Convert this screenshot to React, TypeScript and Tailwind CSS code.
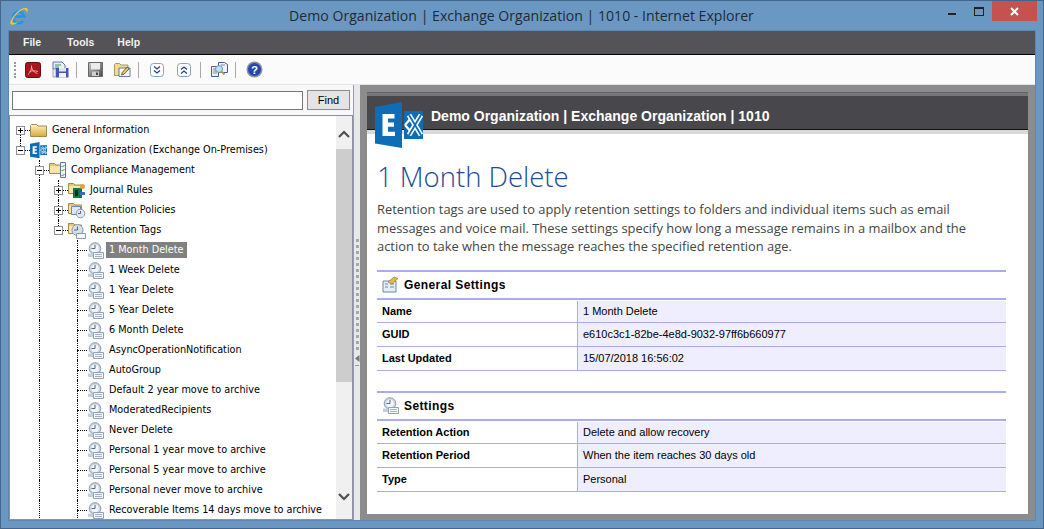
import React from "react";

function Folder() {
  return (
    <svg width="17" height="16" viewBox="0 0 17 16" className="shrink-0">
      <defs>
        <linearGradient id="fold" x1="0" y1="0" x2="0" y2="1">
          <stop offset="0" stopColor="#fff3c4" />
          <stop offset="1" stopColor="#d9a93c" />
        </linearGradient>
      </defs>
      <path d="M0.500 14.500V3.500l1-1h5l1.500 1.500h8.500v10.500z" fill="url(#fold)" stroke="#a08a4c" />
    </svg>
  );
}

function TagIcon({ size = 17 }: { size?: number }) {
  return (
    <svg width={size} height={size} viewBox="0 0 17 17" className="shrink-0">
      <circle cx="8" cy="6.500" r="5.800" fill="#c9d4e2" stroke="#8f9cae" />
      <circle cx="8" cy="6.500" r="3.800" fill="#f2f5f9" />
      <path d="M8 3v3.500H4.500" stroke="#56657a" fill="none" />
      <path d="M1 11.500h7V15H1z" fill="#c5d0dd" />
      <path d="M6.500 10.500h10v6h-10z" fill="#f3f6fa" stroke="#93a1b4" />
      <path d="M8 12.500h7M8 14.500h7" stroke="#a5b3c4" />
    </svg>
  );
}

function ExLogo({ size = 16 }: { size?: number }) {
  return (
    <svg width={size} height={size * 46 / 48} viewBox="0 0 48 46" className="shrink-0">
      <path d="M0 5 27 0v46L0 41.500z" fill="#0e6db6" />
      <path d="M29 9h19v28H29z" fill="#0e6db6" />
      <path d="M7.500 12h12v4.500H13v4h6v4.300h-6v5h7V34H7.500z" fill="#fff" />
      <path d="M30 23l7-8M30 23l7 8" stroke="#fff" strokeWidth="2.200" fill="none" />
      <path d="M34 13l12 20M46 13L34 33" stroke="#fff" strokeWidth="5" fill="none" />
      <path d="M34 13l12 20M46 13L34 33" stroke="#0e6db6" strokeWidth="1.800" fill="none" />
    </svg>
  );
}

function TreeIcon({ kind }: { kind: string }) {
  if (kind === "folder") return <Folder />;
  if (kind === "ex") return <ExLogo size={17} />;
  return (
    <svg width="18" height="18" viewBox="0 0 18 18" className="shrink-0">
      <path d="M0.500 12.500V2.500h5l1.500 1.500h6.500v8.500z" fill="#e8c86e" stroke="#a08a4c" />
      <path d="M1 5h12v7H1z" fill="#f6e6ad" />
      {kind === "compliance" && (
        <>
          <path d="M11.500 1.500h5v15h-5z" fill="#eef3f8" stroke="#5f7a9e" />
          <path d="M12.500 5l1 1 2-2M12.500 9l1 1 2-2M12.500 14l1 1 2-2" stroke="#3e9b3e" fill="none" />
        </>
      )}
      {kind === "journal" && (
        <>
          <path d="M5 7h9v10H5z" fill="#0f7a3b" />
          <path d="M7 9h3v6H7z" fill="#0c2a16" />
          <circle cx="14.500" cy="5.500" r="2.500" fill="#e8a13c" />
          <path d="M12 11h5v3h-5z" fill="#3b6cc4" />
        </>
      )}
      {kind === "policies" && (
        <>
          <path d="M3.500 5.500h9v8h-9z" fill="#dde7f3" stroke="#6d87aa" />
          <circle cx="12.500" cy="12.500" r="4.300" fill="#e3e8ef" stroke="#8d9aab" />
          <path d="M12.500 10v2.500H10" stroke="#5a6675" fill="none" />
        </>
      )}
      {kind === "tags" && (
        <>
          <circle cx="9.500" cy="9" r="5.500" fill="#d6dfea" stroke="#8d9aab" />
          <path d="M9.500 5.500V9H6" stroke="#5a6675" fill="none" />
          <path d="M8.500 12.500h9v5h-9z" fill="#f3f6fa" stroke="#8d9aab" />
        </>
      )}
    </svg>
  );
}

function Expander({ open }: { open: boolean }) {
  return (
    <span className="relative z-10 flex h-[9px] w-[9px] items-center justify-center border border-[#8f8f8f] bg-white">
      <span className="absolute h-px w-[5px] bg-black" />
      {!open && <span className="absolute h-[5px] w-px bg-black" />}
    </span>
  );
}

type Row = {
  depth: number;
  label: string;
  icon: string;
  exp?: "open" | "closed";
  guides: number[];
  up?: boolean;
  down?: boolean;
  selected?: boolean;
};

const leaves = [
  "1 Month Delete",
  "1 Week Delete",
  "1 Year Delete",
  "5 Year Delete",
  "6 Month Delete",
  "AsyncOperationNotification",
  "AutoGroup",
  "Default 2 year move to archive",
  "ModeratedRecipients",
  "Never Delete",
  "Personal 1 year move to archive",
  "Personal 5 year move to archive",
  "Personal never move to archive",
  "Recoverable Items 14 days move to archive",
];

const rows: Row[] = [
  { depth: 0, label: "General Information", icon: "folder", exp: "closed", guides: [], down: true },
  { depth: 0, label: "Demo Organization (Exchange On-Premises)", icon: "ex", exp: "open", guides: [], up: true },
  { depth: 1, label: "Compliance Management", icon: "compliance", exp: "open", guides: [], up: true, down: true },
  { depth: 2, label: "Journal Rules", icon: "journal", exp: "closed", guides: [1], up: true, down: true },
  { depth: 2, label: "Retention Policies", icon: "policies", exp: "closed", guides: [1], up: true, down: true },
  { depth: 2, label: "Retention Tags", icon: "tags", exp: "open", guides: [1], up: true },
  ...leaves.map((label, i) => ({
    depth: 3,
    label,
    icon: "tag",
    guides: [1],
    up: true,
    down: true,
    selected: i === 0,
  })),
];

function TreeRow({ row }: { row: Row }) {
  const slots = [0, 1, 2, 3].slice(0, row.depth);
  return (
    <div className="flex h-5 shrink-0 items-center whitespace-nowrap">
      {slots.map((s) => (
        <span key={s} className="flex h-full w-[19px] shrink-0 justify-center">
          {row.guides.includes(s) && <span className="h-full border-l border-dotted border-black" />}
        </span>
      ))}
      <span className="relative flex h-full w-[19px] shrink-0 items-center justify-center">
        {row.up && <span className="absolute left-[9px] top-0 h-1/2 border-l border-dotted border-black" />}
        {row.down && <span className="absolute bottom-0 left-[9px] h-1/2 border-l border-dotted border-black" />}
        <span className="absolute left-[9px] top-1/2 w-[10px] border-t border-dotted border-black" />
        {row.exp && <Expander open={row.exp === "open"} />}
      </span>
      <span className="flex w-[21px] shrink-0 items-center">
        {row.icon === "tag" ? <TagIcon /> : <TreeIcon kind={row.icon} />}
      </span>
      <span
        className={
          row.selected
            ? "ml-[-2px] bg-[#808080] px-[3px] py-px text-white"
            : "ml-[-2px] px-[3px] py-px text-black"
        }
      >
        {row.label}
      </span>
    </div>
  );
}

function Sep() {
  return <span className="ml-[7px] mr-[9px] h-4 w-px bg-[#a9a9a9]" />;
}

function Btn({ children, last }: { children: React.ReactNode; last?: boolean }) {
  return (
    <span className={last ? "flex h-[18px] w-[18px] items-center justify-center" : "mr-[9px] flex h-[18px] w-[18px] items-center justify-center"}>
      {children}
    </span>
  );
}

function Toolbar() {
  return (
    <div className="flex h-[30px] items-center border-b border-[#e3e3e3] bg-[#fbfbfb] pl-[5px]">
      <span className="mr-[8px] h-4 border-l-2 border-dotted border-[#9a9a9a]" />
      <Btn>
        <svg width="16" height="16" viewBox="0 0 16 16">
          <rect x="0.500" y="0.500" width="15" height="15" rx="2" fill="#a9151b" stroke="#6d0c10" />
          <path d="M3 12.500c2.500-1.500 4-6 3.500-9M4.500 9.500c2-.8 5-1 8.500 0M6.500 5c.5 3 3 6 6 6.500" stroke="#f0c8c8" fill="none" strokeWidth="0.800" />
        </svg>
      </Btn>
      <Btn last>
        <svg width="17" height="17" viewBox="0 0 17 17">
          <path d="M1 1h9l3 3v4H1z" fill="#e9eef7" stroke="#5b76ad" />
          <path d="M3 4h6M3 6h4" stroke="#3f9a46" />
          <path d="M1 8h3v8H1z" fill="#e9eef7" stroke="#5b76ad" strokeWidth="0.600" />
          <path d="M4 7h12.500v9.500H4z" fill="#4752b5" />
          <path d="M7 7h7v3.500H7z" fill="#dfe4f5" />
          <path d="M7 12h7v4.500H7z" fill="#f3f3fb" />
        </svg>
      </Btn>
      <Sep />
      <Btn>
        <svg width="15" height="15" viewBox="0 0 15 15">
          <defs>
            <linearGradient id="disk" x1="0" y1="0" x2="1" y2="1">
              <stop offset="0" stopColor="#c9c9c9" />
              <stop offset="1" stopColor="#4a4a4a" />
            </linearGradient>
          </defs>
          <path d="M0.500 0.500h14v14h-14z" fill="url(#disk)" stroke="#666" />
          <path d="M3 1h9v6.500H3z" fill="#ececec" />
          <path d="M4 9.500h7V14H4z" fill="#d0d0d0" />
          <path d="M8 10.500h2V13H8z" fill="#444" />
        </svg>
      </Btn>
      <Btn last>
        <svg width="17" height="17" viewBox="0 0 17 17">
          <path d="M0.500 14.500V3.500l1-1h4l1.500 1.500h7v10.500z" fill="#f1d98e" stroke="#a9986a" />
          <path d="M5 15.500V7h11v8.500z" fill="#f4f8fc" stroke="#44607f" strokeWidth="0.800" />
          <path d="M7.500 14l.7-2.500 5-5.500 2 1.800-5.200 5.500z" fill="#eec34b" stroke="#333" strokeWidth="0.700" />
        </svg>
      </Btn>
      <Sep />
      <Btn>
        <svg width="14" height="14" viewBox="0 0 14 14">
          <rect x="0.500" y="0.500" width="13" height="13" rx="3" fill="#fff" stroke="#83a3c6" />
          <path d="M4 3.500l3 2.500 3-2.500M4 7.500l3 2.500 3-2.500" stroke="#27408e" strokeWidth="1.300" fill="none" />
        </svg>
      </Btn>
      <Btn last>
        <svg width="14" height="14" viewBox="0 0 14 14">
          <rect x="0.500" y="0.500" width="13" height="13" rx="3" fill="#fff" stroke="#83a3c6" />
          <path d="M4 6.500l3-2.500 3 2.500M4 10.500l3-2.500 3 2.500" stroke="#27408e" strokeWidth="1.300" fill="none" />
        </svg>
      </Btn>
      <Sep />
      <Btn last>
        <svg width="17" height="17" viewBox="0 0 17 17">
          <path d="M7.500 1.500h6l3 2v8h-9z" fill="#eef2f8" stroke="#3f5e92" />
          <path d="M0.500 5.500h7v10h-7z" fill="#eef2f8" stroke="#3f5e92" />
          <path d="M2 8h4M2 10h4M2 12h4M10 4h4" stroke="#7a8aa5" />
          <circle cx="8" cy="8" r="3.500" fill="#bfe0f2" stroke="#6a94b3" />
          <path d="M10.500 10.500l3 3" stroke="#c39a3a" strokeWidth="1.800" />
        </svg>
      </Btn>
      <Sep />
      <Btn last>
        <svg width="17" height="17" viewBox="0 0 17 17">
          <circle cx="8.500" cy="8.500" r="8" fill="#8a93a6" />
          <circle cx="8.500" cy="8.500" r="6.500" fill="#2646a8" />
          <text x="8.500" y="12.500" textAnchor="middle" fontSize="11.500" fontWeight="700" fill="#fff" fontFamily="Liberation Sans, sans-serif">?</text>
        </svg>
      </Btn>
    </div>
  );
}

function Section({
  icon,
  title,
  rows,
}: {
  icon: React.ReactNode;
  title: string;
  rows: [string, string][];
}) {
  return (
    <section className="border-t-2 border-[#aaaaee]">
      <div className="flex h-[26px] items-center gap-[5px] pl-[5px] text-[12px] font-bold text-black">
        {icon}
        <span className="tracking-[0.4px]">{title}</span>
      </div>
      <div className="border-t-2 border-[#aaaaee]">
        {rows.map(([k, v]) => (
          <div key={k} className="flex h-6 border-b border-[#aaaaee] first:h-[23px] first:pt-px">
            <div className="flex w-[201px] items-center border-r border-[#aaaaee] pl-[5px] font-bold text-black">{k}</div>
            <div className="flex flex-1 items-center bg-[#eeeeff] pl-[5px] text-black">{v}</div>
          </div>
        ))}
      </div>
    </section>
  );
}

const grips = Array.from({ length: 19 }, (_, i) => i);

export default function App() {
  return (
    <div className="flex h-[529px] w-[1044px] flex-col overflow-hidden border border-[#44658c] bg-[#6b98c3] font-['Liberation_Sans',sans-serif]">
      <header className="relative flex h-[29px] shrink-0 items-center justify-center text-[#1f2a36]">
        <svg width="20" height="20" viewBox="0 0 20 20" className="absolute left-[8px] top-[5px]">
          <path d="M5.500 10.500h9.700A5.700 5.700 0 1 0 14 15" stroke="#1f96ea" strokeWidth="2.600" fill="none" />
          <path d="M1.500 18C0 15 8 3 16 2c3-.4 3.500 2 2 5-.5-3-2-4-4-3.300C8 6 3 13 3.500 16.500c2 1 5-.3 6-.8-2.500 2.500-7 4-8 2.300z" fill="#f3c52e" />
        </svg>
        <h1 className="ml-[-1px] font-['Open_Sans',sans-serif] text-[14.100px] font-normal">
          Demo Organization | Exchange Organization | 1010 - Internet Explorer
        </h1>
        <div className="absolute right-[6px] top-0 flex h-[20px] items-start">
          <span className="mr-[18px] mt-[12px] h-[2px] w-2 bg-[#222]" />
          <span className="mr-[8px] mt-[6px] h-[9px] w-[10px] border border-t-2 border-[#222]" />
          <span className="flex h-[20px] w-[45px] items-center justify-center bg-[#c75050] text-white">
            <svg width="9" height="9" viewBox="0 0 9 9">
              <path d="M1 1l7 7M8 1L1 8" stroke="#fff" strokeWidth="2" />
            </svg>
          </span>
        </div>
      </header>

      <div className="mx-[7px] mb-[7px] flex min-h-0 flex-1 flex-col border border-[#5e87b0] bg-[#f0f0f0]">
        <nav className="flex h-[24px] shrink-0 items-center border-b border-black bg-[#545357] pl-[14px] text-[10.500px] font-bold text-[#f2f2f2]">
          <span className="mr-[26px]">File</span>
          <span className="mr-[23px]">Tools</span>
          <span>Help</span>
        </nav>
        <Toolbar />

        <div className="flex min-h-0 flex-1">
          <aside className="flex w-[344px] shrink-0 flex-col bg-white pl-0">
            <form className="flex h-[30px] shrink-0 items-center gap-[4px] bg-[#f8f8f8] pl-[3px]">
              <input className="h-[19px] w-[291px] border border-[#777] bg-white" aria-label="Find" />
              <button type="button" className="h-[20px] w-[43px] border border-[#8c8c8c] bg-[#e4e4e4] text-[11px] text-black">
                Find
              </button>
            </form>
            <div className="flex min-h-0 flex-1 border border-[#8f8fa6] bg-white">
              <div className="min-w-0 flex-1 overflow-hidden pl-[1px] pt-[4px] font-['DejaVu_Sans',sans-serif] text-[9.700px] text-black">
                {rows.map((r) => (
                  <TreeRow key={r.label} row={r} />
                ))}
              </div>
              <div className="flex w-4 shrink-0 flex-col items-center bg-[#f0f0f0]">
                <span className="flex h-[33px] shrink-0 items-end pb-[11px]">
                  <svg width="12" height="8" viewBox="0 0 12 8">
                    <path d="M1 7l5-5 5 5" stroke="#505050" strokeWidth="2.200" fill="none" />
                  </svg>
                </span>
                <span className="h-[233px] w-full shrink-0 bg-[#cdcdcd]" />
                <span className="flex flex-1 items-end justify-center pb-[18px]">
                  <svg width="12" height="8" viewBox="0 0 12 8">
                    <path d="M1 1l5 5 5-5" stroke="#505050" strokeWidth="2.200" fill="none" />
                  </svg>
                </span>
              </div>
            </div>
          </aside>

          <div className="flex w-[7px] shrink-0 flex-col items-center justify-center gap-[3px] border-l border-[#9a9ab0] bg-[#e8e8e8]">
            {grips.map((g) => (
              <span key={g} className="h-[3px] w-[3px] bg-[#a8a8a8]" />
            ))}
            <svg width="5" height="7" viewBox="0 0 5 7" className="mt-[2px]">
              <path d="M4.500 0v7L0 3.500z" fill="#777" />
            </svg>
            <span className="h-px w-[4px] bg-[#999]" />
          </div>

          <main className="flex min-w-0 flex-1 flex-col bg-[#8c8c8c] px-[7px] pb-[6px] pt-[7px]">
            <div className="relative flex min-h-0 flex-1 flex-col bg-white">
              <div className="flex h-[37px] shrink-0 items-center border-t border-[#5b6475] bg-[#48474b] pl-[64px] pt-[10px] font-['Liberation_Sans',sans-serif] text-[14px] font-bold text-white shadow-[inset_0_3px_0_#77777a,0_1px_0_#111,0_5px_0_#d9d9d9]">
                Demo Organization | Exchange Organization | 1010
              </div>
              <div className="absolute left-[8px] top-[10px]">
                <ExLogo size={48} />
              </div>
              <div className="flex min-h-0 flex-1 flex-col px-[10px] pt-[29px]">
                <h2 className="font-['Open_Sans',sans-serif] text-[27.500px] font-light leading-[38px] text-[#1c4c97]">
                  1 Month Delete
                </h2>
                <p className="mr-[16px] mt-[4px] font-['Open_Sans',sans-serif] text-[12.900px] leading-[18.500px] text-[#444]">
                  Retention tags are used to apply retention settings to folders and individual items such as email messages and voice mail. These settings specify how long a message remains in a mailbox and the action to take when the message reaches the specified retention age.
                </p>
                <div className="mr-[12px] mt-[14px] flex flex-col gap-[20px] text-[11px]">
                  <Section
                    title="General Settings"
                    icon={
                      <svg width="17" height="17" viewBox="0 0 17 17">
                        <path d="M1 5h13v11H1z" fill="#e4edf8" stroke="#6d86a8" />
                        <path d="M3 8h3M3 11h3M8 8h4M8 11h4" stroke="#6d86a8" />
                        <path d="M6 6l6-5 4 1.500-6 5.500z" fill="#e0b94f" stroke="#9b7a2b" strokeWidth="0.700" />
                      </svg>
                    }
                    rows={[
                      ["Name", "1 Month Delete"],
                      ["GUID", "e610c3c1-82be-4e8d-9032-97ff6b660977"],
                      ["Last Updated", "15/07/2018 16:56:02"],
                    ]}
                  />
                  <Section
                    title="Settings"
                    icon={<TagIcon />}
                    rows={[
                      ["Retention Action", "Delete and allow recovery"],
                      ["Retention Period", "When the item reaches 30 days old"],
                      ["Type", "Personal"],
                    ]}
                  />
                </div>
              </div>
            </div>
          </main>
        </div>
      </div>
    </div>
  );
}
